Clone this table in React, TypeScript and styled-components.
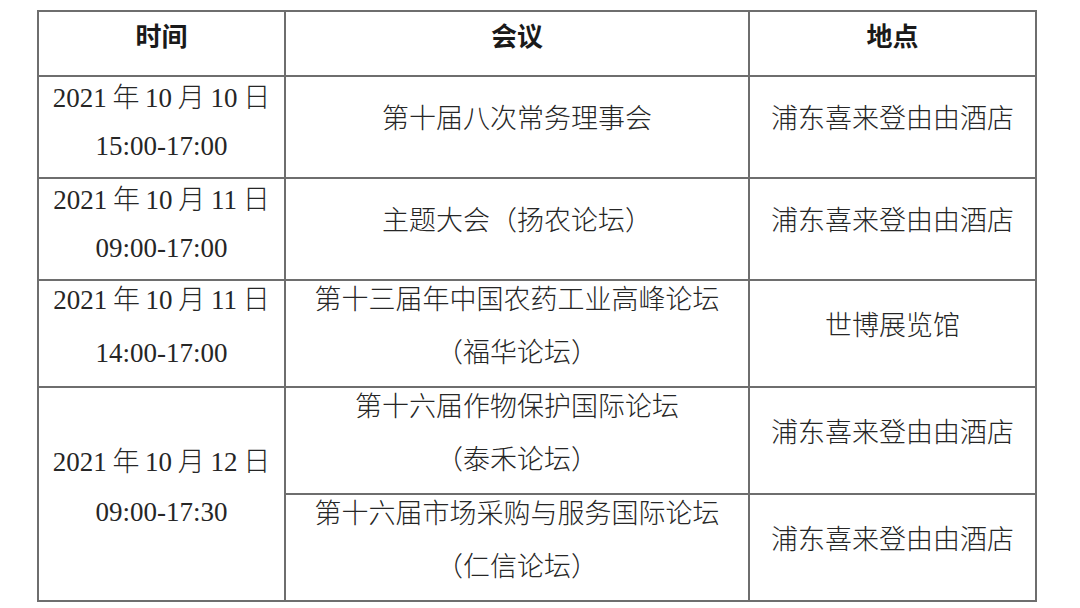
import { createGlobalStyle, styled } from "styled-components";

const GlobalStyle = createGlobalStyle`
    html, body {
        margin: 0;
        padding: 0;
        background: #ffffff;
    }
`

const Page = styled.div`
    padding: 10px 0 0 37px;
    font-family: "Liberation Serif", "Noto Sans CJK SC", serif;
    color: #262626;
`

const Table = styled.table`
    border-collapse: collapse;
    table-layout: fixed;
    width: 998px;
`

const Head = styled.th`
    height: 65px;
    box-sizing: border-box;
    border: 2px solid #6e6e6e;
    font-family: "Noto Sans CJK SC", sans-serif;
    font-weight: 700;
    font-size: 26px;
    color: #1a1a1a;
    text-align: center;
    vertical-align: top;
    padding: 3px 0 0;
    line-height: 40px;
`

const Cell = styled.td<{ $h: number; $pb?: number }>`
    height: ${(p) => p.$h}px;
    box-sizing: border-box;
    border: 2px solid #6e6e6e;
    font-size: 27px;
    font-weight: 300;
    text-align: center;
    vertical-align: middle;
    padding: 0 0 ${(p) => p.$pb ?? 16}px;
    word-spacing: -1px;
    white-space: nowrap;
`

const Stack = styled.div<{ $gap: number }>`
    display: flex;
    flex-direction: column;
    align-items: center;
    gap: ${(p) => p.$gap}px;
`

const Line = styled.div`
    line-height: 36px;
`

type Row = {
    date?: string
    time?: string
    span?: number
    meeting: string[]
    place: string
    h: number
    gap: number
}

const rows: Row[] = [
    { date: "2021 年 10 月 10 日", time: "15:00-17:00", meeting: ["第十届八次常务理事会"], place: "浦东喜来登由由酒店", h: 102, gap: 12 },
    { date: "2021 年 10 月 11 日", time: "09:00-17:00", meeting: ["主题大会（扬农论坛）"], place: "浦东喜来登由由酒店", h: 102, gap: 12 },
    { date: "2021 年 10 月 11 日", time: "14:00-17:00", meeting: ["第十三届年中国农药工业高峰论坛", "（福华论坛）"], place: "世博展览馆", h: 107, gap: 17 },
    { date: "2021 年 10 月 12 日", time: "09:00-17:30", span: 2, meeting: ["第十六届作物保护国际论坛", "（泰禾论坛）"], place: "浦东喜来登由由酒店", h: 107, gap: 17 },
    { meeting: ["第十六届市场采购与服务国际论坛", "（仁信论坛）"], place: "浦东喜来登由由酒店", h: 107, gap: 17 },
]

export default function App() {
    return (
        <Page>
            <GlobalStyle />
            <Table>
                <colgroup>
                    <col style={{ width: 247 }} />
                    <col style={{ width: 464 }} />
                    <col style={{ width: 287 }} />
                </colgroup>
                <thead>
                    <tr>
                        <Head>时间</Head>
                        <Head>会议</Head>
                        <Head>地点</Head>
                    </tr>
                </thead>
                <tbody>
                    {rows.map((r, i) => (
                        <tr key={i}>
                            {r.date && (
                                <Cell $h={r.h} $pb={r.gap === 12 ? 10 : 14} rowSpan={r.span ?? 1}>
                                    <Stack $gap={r.span ? 14 : r.gap}>
                                        <Line>{r.date}</Line>
                                        <Line>{r.time}</Line>
                                    </Stack>
                                </Cell>
                            )}
                            <Cell $h={r.h} $pb={r.meeting.length > 1 ? 14 : 16}>
                                <Stack $gap={r.gap}>
                                    {r.meeting.map((m) => (
                                        <Line key={m}>{m}</Line>
                                    ))}
                                </Stack>
                            </Cell>
                            <Cell $h={r.h}>
                                <Line>{r.place}</Line>
                            </Cell>
                        </tr>
                    ))}
                </tbody>
            </Table>
        </Page>
    )
}
